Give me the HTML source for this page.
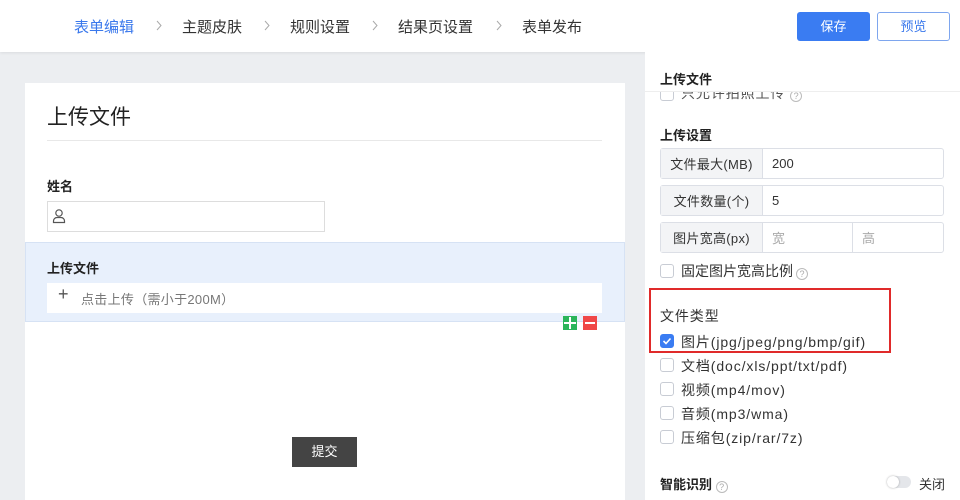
<!DOCTYPE html>
<html><head><meta charset="utf-8"><style>
*{margin:0;padding:0;box-sizing:border-box}
body{width:960px;height:500px;overflow:hidden;position:relative;background:#eceef1;font-family:"Liberation Sans","Noto Sans CJK SC",sans-serif;color:#333}
.a{position:absolute}
.hdr{left:0;top:0;width:960px;height:52px;background:#fff;box-shadow:0 1px 3px rgba(0,0,0,.08)}
.nav{top:16px;font-size:15px;color:#333}
.card{left:25px;top:83px;width:600px;height:417px;background:#fff}
.rp{left:645px;top:52px;width:315px;height:448px;background:#fff}
.lbl{font-size:13px;font-weight:bold;color:#222}
.grp{left:660px;width:284px;height:31px;border:1px solid #dcdfe6;border-radius:3px;display:flex;font-size:13px;background:#fff}
.grp .k{width:102px;background:#f3f4f6;border-right:1px solid #dcdfe6;display:flex;align-items:center;justify-content:center;color:#333;letter-spacing:.3px}
.grp .v{flex:1;display:flex;align-items:center;padding-left:9px}
.cb{width:14px;height:14px;border:1px solid #c8ccd4;border-radius:3px;background:#fff}
.ct{font-size:14px;color:#333;letter-spacing:.9px}
.q{display:inline-block;width:12px;height:12px;border:1px solid #bbb;border-radius:50%;font-size:9px;line-height:10px;text-align:center;color:#aaa;font-weight:normal;vertical-align:-1px;letter-spacing:0}
</style></head><body>
<div class="a hdr"></div>
<div class="a nav" style="left:74px;color:#3a78ec">表单编辑</div>
<svg class="a" style="left:156px;top:20px" width="6" height="11"><path d="M1 1l4 4.5-4 4.5" fill="none" stroke="#aaa"/></svg>
<div class="a nav" style="left:182px">主题皮肤</div>
<svg class="a" style="left:264px;top:20px" width="6" height="11"><path d="M1 1l4 4.5-4 4.5" fill="none" stroke="#aaa"/></svg>
<div class="a nav" style="left:290px">规则设置</div>
<svg class="a" style="left:372px;top:20px" width="6" height="11"><path d="M1 1l4 4.5-4 4.5" fill="none" stroke="#aaa"/></svg>
<div class="a nav" style="left:398px">结果页设置</div>
<svg class="a" style="left:496px;top:20px" width="6" height="11"><path d="M1 1l4 4.5-4 4.5" fill="none" stroke="#aaa"/></svg>
<div class="a nav" style="left:522px">表单发布</div>
<div class="a" style="left:797px;top:12px;width:73px;height:29px;background:#3a7cf2;border-radius:3px;color:#fff;font-size:13px;text-align:center;line-height:29px">保存</div>
<div class="a" style="left:877px;top:12px;width:73px;height:29px;border:1px solid #7ea6ee;border-radius:3px;color:#3a78ec;font-size:13px;text-align:center;line-height:27px">预览</div>

<div class="a card"></div>
<div class="a" style="left:47px;top:101px;font-size:21px;color:#222">上传文件</div>
<div class="a" style="left:47px;top:140px;width:555px;height:1px;background:#e8e8e8"></div>
<div class="a lbl" style="left:47px;top:176px">姓名</div>
<div class="a" style="left:47px;top:201px;width:278px;height:31px;border:1px solid #ddd"></div>
<svg class="a" style="left:52px;top:208px" width="14" height="16" viewBox="0 0 14 16"><circle cx="7" cy="5" r="3.2" fill="none" stroke="#555" stroke-width="1.2"/><path d="M1.5 14.5v-1.5a3.5 3.5 0 0 1 3.5-3.5h4a3.5 3.5 0 0 1 3.5 3.5v1.5z" fill="none" stroke="#555" stroke-width="1.2"/></svg>
<div class="a" style="left:25px;top:242px;width:600px;height:80px;background:#e8f0fc;border:1px solid #d6e2f4"></div>
<div class="a lbl" style="left:47px;top:258px">上传文件</div>
<div class="a" style="left:47px;top:283px;width:555px;height:30px;background:#fff"></div>
<div class="a" style="left:58px;top:284px;font-size:18px;color:#555">+</div>
<div class="a" style="left:81px;top:289px;font-size:13px;color:#777;letter-spacing:.3px">点击上传（需小于200M）</div>
<div class="a" style="left:563px;top:316px;width:14px;height:14px;background:#2bb55a"><div class="a" style="left:6px;top:1px;width:2px;height:12px;background:#fff"></div><div class="a" style="left:1px;top:6px;width:12px;height:2px;background:#fff"></div></div>
<div class="a" style="left:583px;top:316px;width:14px;height:14px;background:#f04848"><div class="a" style="left:2px;top:6px;width:10px;height:2px;background:#fff"></div></div>
<div class="a" style="left:292px;top:437px;width:65px;height:30px;background:#444;color:#fff;font-size:13px;text-align:center;line-height:30px">提交</div>

<div class="a rp"></div>
<div class="a lbl" style="left:660px;top:69px">上传文件</div>
<div class="a" style="left:645px;top:91px;width:315px;height:1px;background:#eee"></div>
<div class="a" style="left:645px;top:92px;width:315px;height:12px;overflow:hidden"><div class="a cb" style="left:15px;top:-5px"></div><div class="a ct" style="left:36px;top:-9px;color:#555">只允许拍照上传 <span class="q">?</span></div></div>
<div class="a lbl" style="left:660px;top:125px">上传设置</div>
<div class="a grp" style="top:148px"><div class="k">文件最大(MB)</div><div class="v">200</div></div>
<div class="a grp" style="top:185px"><div class="k">文件数量(个)</div><div class="v">5</div></div>
<div class="a grp" style="top:222px"><div class="k">图片宽高(px)</div><div class="v" style="color:#aaa;flex:0 0 90px;border-right:1px solid #dcdfe6">宽</div><div class="v" style="color:#aaa">高</div></div>
<div class="a cb" style="left:660px;top:264px"></div>
<div class="a ct" style="left:681px;top:261px;letter-spacing:0">固定图片宽高比例<span class="q" style="margin-left:3px">?</span></div>
<div class="a" style="left:649px;top:288px;width:242px;height:65px;border:2px solid #e02a2a"></div>
<div class="a ct" style="left:660px;top:306px">文件类型</div>
<div class="a cb" style="left:660px;top:334px;background:#3a7cf2;border-color:#3a7cf2"><svg class="a" style="left:1px;top:1px" width="10" height="10" viewBox="0 0 10 10"><path d="M1.5 5l2.5 2.5 4.5-5" fill="none" stroke="#fff" stroke-width="1.6"/></svg></div>
<div class="a ct" style="left:681px;top:332px">图片(jpg/jpeg/png/bmp/gif)</div>
<div class="a cb" style="left:660px;top:358px"></div><div class="a ct" style="left:681px;top:356px">文档(doc/xls/ppt/txt/pdf)</div>
<div class="a cb" style="left:660px;top:382px"></div><div class="a ct" style="left:681px;top:380px">视频(mp4/mov)</div>
<div class="a cb" style="left:660px;top:406px"></div><div class="a ct" style="left:681px;top:404px">音频(mp3/wma)</div>
<div class="a cb" style="left:660px;top:430px"></div><div class="a ct" style="left:681px;top:428px">压缩包(zip/rar/7z)</div>
<div class="a lbl" style="left:660px;top:474px">智能识别 <span class="q">?</span></div>
<div class="a" style="left:887px;top:476px;width:24px;height:12px;border-radius:6px;background:#e4e6ea"><div class="a" style="left:0;top:0;width:12px;height:12px;border-radius:6px;background:#fff;box-shadow:0 0 2px rgba(0,0,0,.3)"></div></div>
<div class="a ct" style="left:919px;top:474px;font-size:13px;letter-spacing:0">关闭</div>
</body></html>
